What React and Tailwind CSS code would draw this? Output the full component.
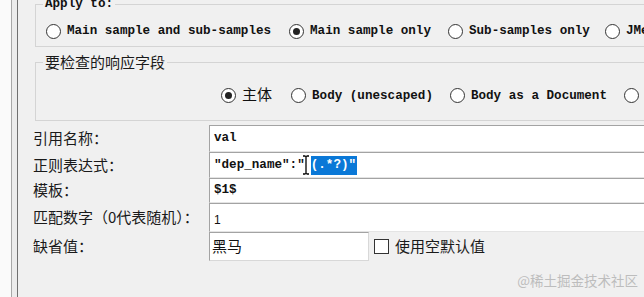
import React from "react";

const mono = { fontFamily: "'Liberation Mono', 'Courier New', Courier, monospace" };
const cjk = { fontFamily: '"Noto Sans CJK SC", "Noto Sans", sans-serif' };

function Radio({ checked, label, cn = "" }) {
  return (
    <div className={`flex items-center gap-[6px] ${cn}`}>
      <span className="w-[15px] h-[15px] rounded-full border border-[#333] bg-white flex items-center justify-center shrink-0">
        {checked && <span className="w-[7px] h-[7px] rounded-full bg-[#222]" />}
      </span>
      <span className="text-[12.6px] leading-[20px] text-[#111] whitespace-nowrap">{label}</span>
    </div>
  );
}

function Field({ label, h, children }) {
  return (
    <div className={`flex ${h}`}>
      <div
        className="w-[176px] shrink-0 text-[15px] text-[#1a1a1a] flex items-center whitespace-nowrap"
        style={cjk}
      >
        {label}
      </div>
      {children}
    </div>
  );
}

const inputCls =
  "flex-1 min-w-0 bg-white border-t border-l border-[#a3a3a3] border-b border-b-[#e4e4e4] flex items-center pl-[4px] text-[12.6px] font-bold text-[#111] whitespace-nowrap";

export default function App() {
  return (
    <div className="relative w-[644px] h-[297px] overflow-hidden bg-[#f0f0f0] flex font-mono" style={mono}>
      {/* ===== LEFT EDGE ===== */}
      <div className="w-[11px] bg-[#fafafa]" />
      <div className="w-px bg-[#a8a8a8]" />
      <div className="w-[5px] bg-[#ececec]" />
      <div className="w-px bg-[#707070]" />

      <div className="flex-1 min-w-0 overflow-hidden flex flex-col">
        {/* ===== APPLY TO ===== */}
        <fieldset className="ml-[17px] -mt-[4px] w-[700px] border border-[#d4d4d4] pl-[10px] pt-[9px] pb-[5px]">
          <legend className="ml-[-3px] px-[2px] text-[12.6px] leading-[16px] font-bold text-[#111]">Apply to:</legend>
          <div className="flex items-center font-bold">
            <Radio label="Main sample and sub-samples" />
            <Radio checked label="Main sample only" cn="ml-[18px]" />
            <Radio label="Sub-samples only" cn="ml-[17px]" />
            <Radio label="JMeter Variable Name to use" cn="ml-[15px]" />
          </div>
        </fieldset>

        {/* ===== FIELD TO CHECK ===== */}
        <fieldset className="ml-[17px] mt-[5px] w-[700px] border border-[#d4d4d4] pl-[185px] pt-[12px] pb-[13px]">
          <legend className="ml-[-178px] px-[2px] text-[15px] leading-[20px] text-[#1a1a1a]" style={cjk}>
            要检查的响应字段
          </legend>
          <div className="flex items-center font-bold">
            <Radio
              checked
              label={<span className="text-[15px] font-normal" style={cjk}>主体</span>}
            />
            <Radio label="Body (unescaped)" cn="ml-[19px]" />
            <Radio label="Body as a Document" cn="ml-[17px]" />
            <Radio label="Response Headers" cn="ml-[17px]" />
          </div>
        </fieldset>

        {/* ===== FORM ===== */}
        <div className="mt-[4px] pl-[15px] flex flex-col">
          <Field label="引用名称：" h="h-[27px]">
            <div className={inputCls}>val</div>
          </Field>
          <Field label="正则表达式：" h="h-[26px]">
            <div className={inputCls}>
              <span>"dep_name":"</span>
              <svg width="6" height="20" viewBox="0 0 6 20" className="ml-[-2px] shrink-0">
                <path d="M0 1h2.5M3.5 1h2.5M3 1v18M0 19h2.5M3.5 19h2.5" stroke="#000" strokeWidth="1.3" fill="none" />
              </svg>
              <span className="ml-[2px] bg-[#0a78d7] text-white h-[19px] flex items-center pr-[1px]">(.*?)"</span>
            </div>
          </Field>
          <Field label="模板：" h="h-[25px]">
            <div className={inputCls}>$1$</div>
          </Field>
          <Field label="匹配数字（0代表随机）：" h="h-[29px]">
            <div className={`${inputCls} pt-[4px]`}>
              <span className="text-[12px] font-normal" style={{ fontFamily: '"Liberation Sans", sans-serif' }}>1</span>
            </div>
          </Field>
          <Field label="缺省值：" h="h-[29px]">
            <div className="flex flex-1 items-center">
              <div
                className="w-[160px] h-full bg-white border border-[#a3a3a3] border-b-[#d8d8d8] border-r-[#d8d8d8] flex items-center pl-[2px] text-[15px] text-[#111]"
                style={cjk}
              >
                黑马
              </div>
              <span className="ml-[5px] w-[15px] h-[15px] border border-[#333] bg-white shrink-0" />
              <span className="ml-[6px] text-[15px] text-[#1a1a1a]" style={cjk}>使用空默认值</span>
            </div>
          </Field>
        </div>
      </div>

      {/* watermark */}
      <div className="absolute right-[6px] bottom-[7px] text-[13.5px] text-[#bdbdbd]" style={cjk}>
        @稀土掘金技术社区
      </div>
    </div>
  );
}
